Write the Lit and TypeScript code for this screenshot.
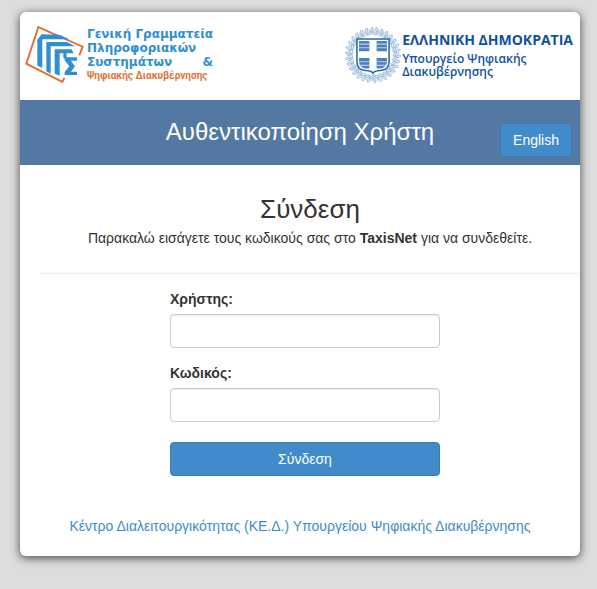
import { LitElement, html, css, svg } from "lit";
import { customElement, state } from "lit/decorators.js";

const BLUE = "#2f8fd0";
const ORANGE = "#e2733a";

@customElement("gsis-logo")
class GsisLogo extends LitElement {
  static styles = css`
    :host { display: flex; align-items: center; gap: 2px; font-family: "DejaVu Sans", sans-serif; font-weight: 700; }
    .mark { width: 60px; height: 60px; flex: none; }
    .lines { color: #2f8fd0; font-size: 12px; line-height: 14px; white-space: nowrap; }
    .line { display: flex; justify-content: space-between; }
    .accent { color: #e2733a; font-family: Roboto, sans-serif; font-size: 10px; }
  `;
  render() {
    return html`
      <svg class="mark" viewBox="0 0 180 180" aria-hidden="true">
        <path d="M163 91 L173 65 L40 6 L4 116 L112 171 L118 159" fill="none" stroke=${ORANGE} stroke-width="6" />
        <g fill=${BLUE}>
          <path d="M50 28 L103 29 L133 43 H52 V129 L37 122 V44 Z" />
          <path d="M64 51 H126 L150 64 H77 V146 L64 139 Z" />
          <path d="M89 73 H140 L146 85 H125 V104 L115 98 V85 H104 V152 L89 146 Z" />
          <path d="M119 97 H156 V107 H138 L150 124 L138 140 H156 V150 H119 V141 L133 124 L119 106 Z" />
        </g>
      </svg>
      <div class="lines">
        <div>Γενική Γραμματεία</div>
        <div>Πληροφοριακών</div>
        <div class="line"><span>Συστημάτων</span> <span>&amp;</span></div>
        <div class="accent">Ψηφιακής Διακυβέρνησης</div>
      </div>
    `;
  }
}

@customElement("republic-logo")
class RepublicLogo extends LitElement {
  static styles = css`
    :host { display: flex; align-items: center; gap: 1px; color: #10519b; font-family: "Open Sans", sans-serif; font-weight: 700; }
    .mark { width: 56px; height: 56px; flex: none; }
    .names { padding-bottom: 4px; white-space: nowrap; }
    .country { font-size: 14px; line-height: 24px; }
    .ministry { font-size: 12px; line-height: 13px; font-weight: 600; }
  `;
  private leaves() {
    return Array.from({ length: 60 }, (_, i) => {
      const r = i % 2 ? 49 : 42;
      const side = i < 30 ? -1 : 1;
      const tilt = side * (i % 2 ? 25 : 60);
      return svg`<ellipse cx="0" cy=${-r} rx="2" ry="5" transform=${`translate(54 54) rotate(${i * 6 + 3}) rotate(${tilt} 0 ${-r})`} />`;
    });
  }
  render() {
    return html`
      <svg class="mark" viewBox="0 0 108 108" aria-hidden="true">
        <circle cx="54" cy="54" r="45" fill="none" stroke="#dbe7f3" stroke-width="11" />
        <g fill="#edf3fa" stroke="#7ba2cd" stroke-width="1.2">${this.leaves()}</g>
        <path d="M23 23 H85 V67 Q85 83 68 84 Q58 84 54 89 Q50 84 40 84 Q23 83 23 67 Z" fill="#fff" stroke="#2a66ac" stroke-width="3" />
        <g fill="#4a80bd">
          <path d="M27 27 H47 V47 H27 Z M61 27 H81 V47 H61 Z" />
          <path d="M27 60 H47 V80 H40 Q27 79 27 66 Z M61 60 H81 V66 Q81 79 68 80 H61 Z" />
        </g>
        <path d="M27 33 H47 M61 33 H81 M27 40 H47 M61 40 H81 M27 67 H47 M61 67 H81 M28 74 H47 M61 74 H80" stroke="#b9d0e8" stroke-width="2" />
      </svg>
      <div class="names">
        <div class="country">ΕΛΛΗΝΙΚΗ ΔΗΜΟΚΡΑΤΙΑ</div>
        <div class="ministry">Υπουργείο Ψηφιακής<br />Διακυβέρνησης</div>
      </div>
    `;
  }
}

@customElement("app-root")
class AppRoot extends LitElement {
  static styles = css`
    * { box-sizing: border-box; }
    :host {
      display: block; min-height: 100vh; padding: 12px 17px 33px 20px; box-sizing: border-box;
      background: #ddd; color: #333; font: 14px/20px "Liberation Sans", Arial, sans-serif;
    }
    .card { max-width: 800px; margin: 0 auto; background: #fff; border-radius: 6px; box-shadow: 0 2px 10px rgba(0, 0, 0, 0.7); }
    .logos { display: flex; justify-content: space-between; align-items: center; height: 88px; padding: 0 7px 3px 5px; }
    .banner { display: grid; grid-template-columns: 1fr auto 1fr; height: 65px; padding: 0 8px; background: #5379a3; color: #fff; }
    .title { grid-column: 2; margin: 18px 0 0; font-size: 24px; line-height: 28px; font-weight: 400; }
    .btn {
      height: 34px; padding: 0 12px; border: 1px solid #357ebd; border-radius: 4px;
      background: #428bca; color: #fff; font: inherit; cursor: pointer;
    }
    .lang { justify-self: end; margin-top: 23px; }
    .content { padding: 28px 0 20px 20px; text-align: center; }
    .heading { margin: 0; font-size: 26px; line-height: 32px; font-weight: 400; }
    .intro { margin: 3px 0 0; }
    .rule { margin: 25px 0 15px; border: 0; border-top: 1px solid #eee; }
    .form { display: flex; flex-direction: column; margin: 0 140px 0 130px; text-align: left; }
    .label { margin-bottom: 5px; font-weight: 700; }
    .field {
      width: 100%; height: 34px; margin-bottom: 15px; padding: 6px 12px; border: 1px solid #ccc; border-radius: 4px;
      background: #fff; box-shadow: inset 0 1px 1px rgba(0, 0, 0, 0.075); font: inherit;
    }
    .submit { margin-top: 5px; }
    .footer { margin: 40px 20px 0 0; }
    .link { color: #428bca; text-decoration: none; }
  `;
  @state() private user = "";
  @state() private password = "";
  render() {
    return html`
      <main class="card">
        <header class="logos"><gsis-logo></gsis-logo><republic-logo></republic-logo></header>
        <div class="banner">
          <h1 class="title">Αυθεντικοποίηση Χρήστη</h1>
          <button class="btn lang" type="button">English</button>
        </div>
        <section class="content">
          <h2 class="heading">Σύνδεση</h2>
          <p class="intro">Παρακαλώ εισάγετε τους κωδικούς σας στο <b>TaxisNet</b> για να συνδεθείτε.</p>
          <hr class="rule" />
          <form class="form" @submit=${(e: Event) => e.preventDefault()}>
            <label class="label" for="user">Χρήστης:</label>
            <input class="field" id="user" type="text" .value=${this.user}
              @input=${(e: InputEvent) => (this.user = (e.target as HTMLInputElement).value)} />
            <label class="label" for="password">Κωδικός:</label>
            <input class="field" id="password" type="password" .value=${this.password}
              @input=${(e: InputEvent) => (this.password = (e.target as HTMLInputElement).value)} />
            <button class="btn submit" type="submit">Σύνδεση</button>
          </form>
          <p class="footer"><a class="link" href="#">Κέντρο Διαλειτουργικότητας (ΚΕ.Δ.) Υπουργείου Ψηφιακής Διακυβέρνησης</a></p>
        </section>
      </main>
    `;
  }
}
